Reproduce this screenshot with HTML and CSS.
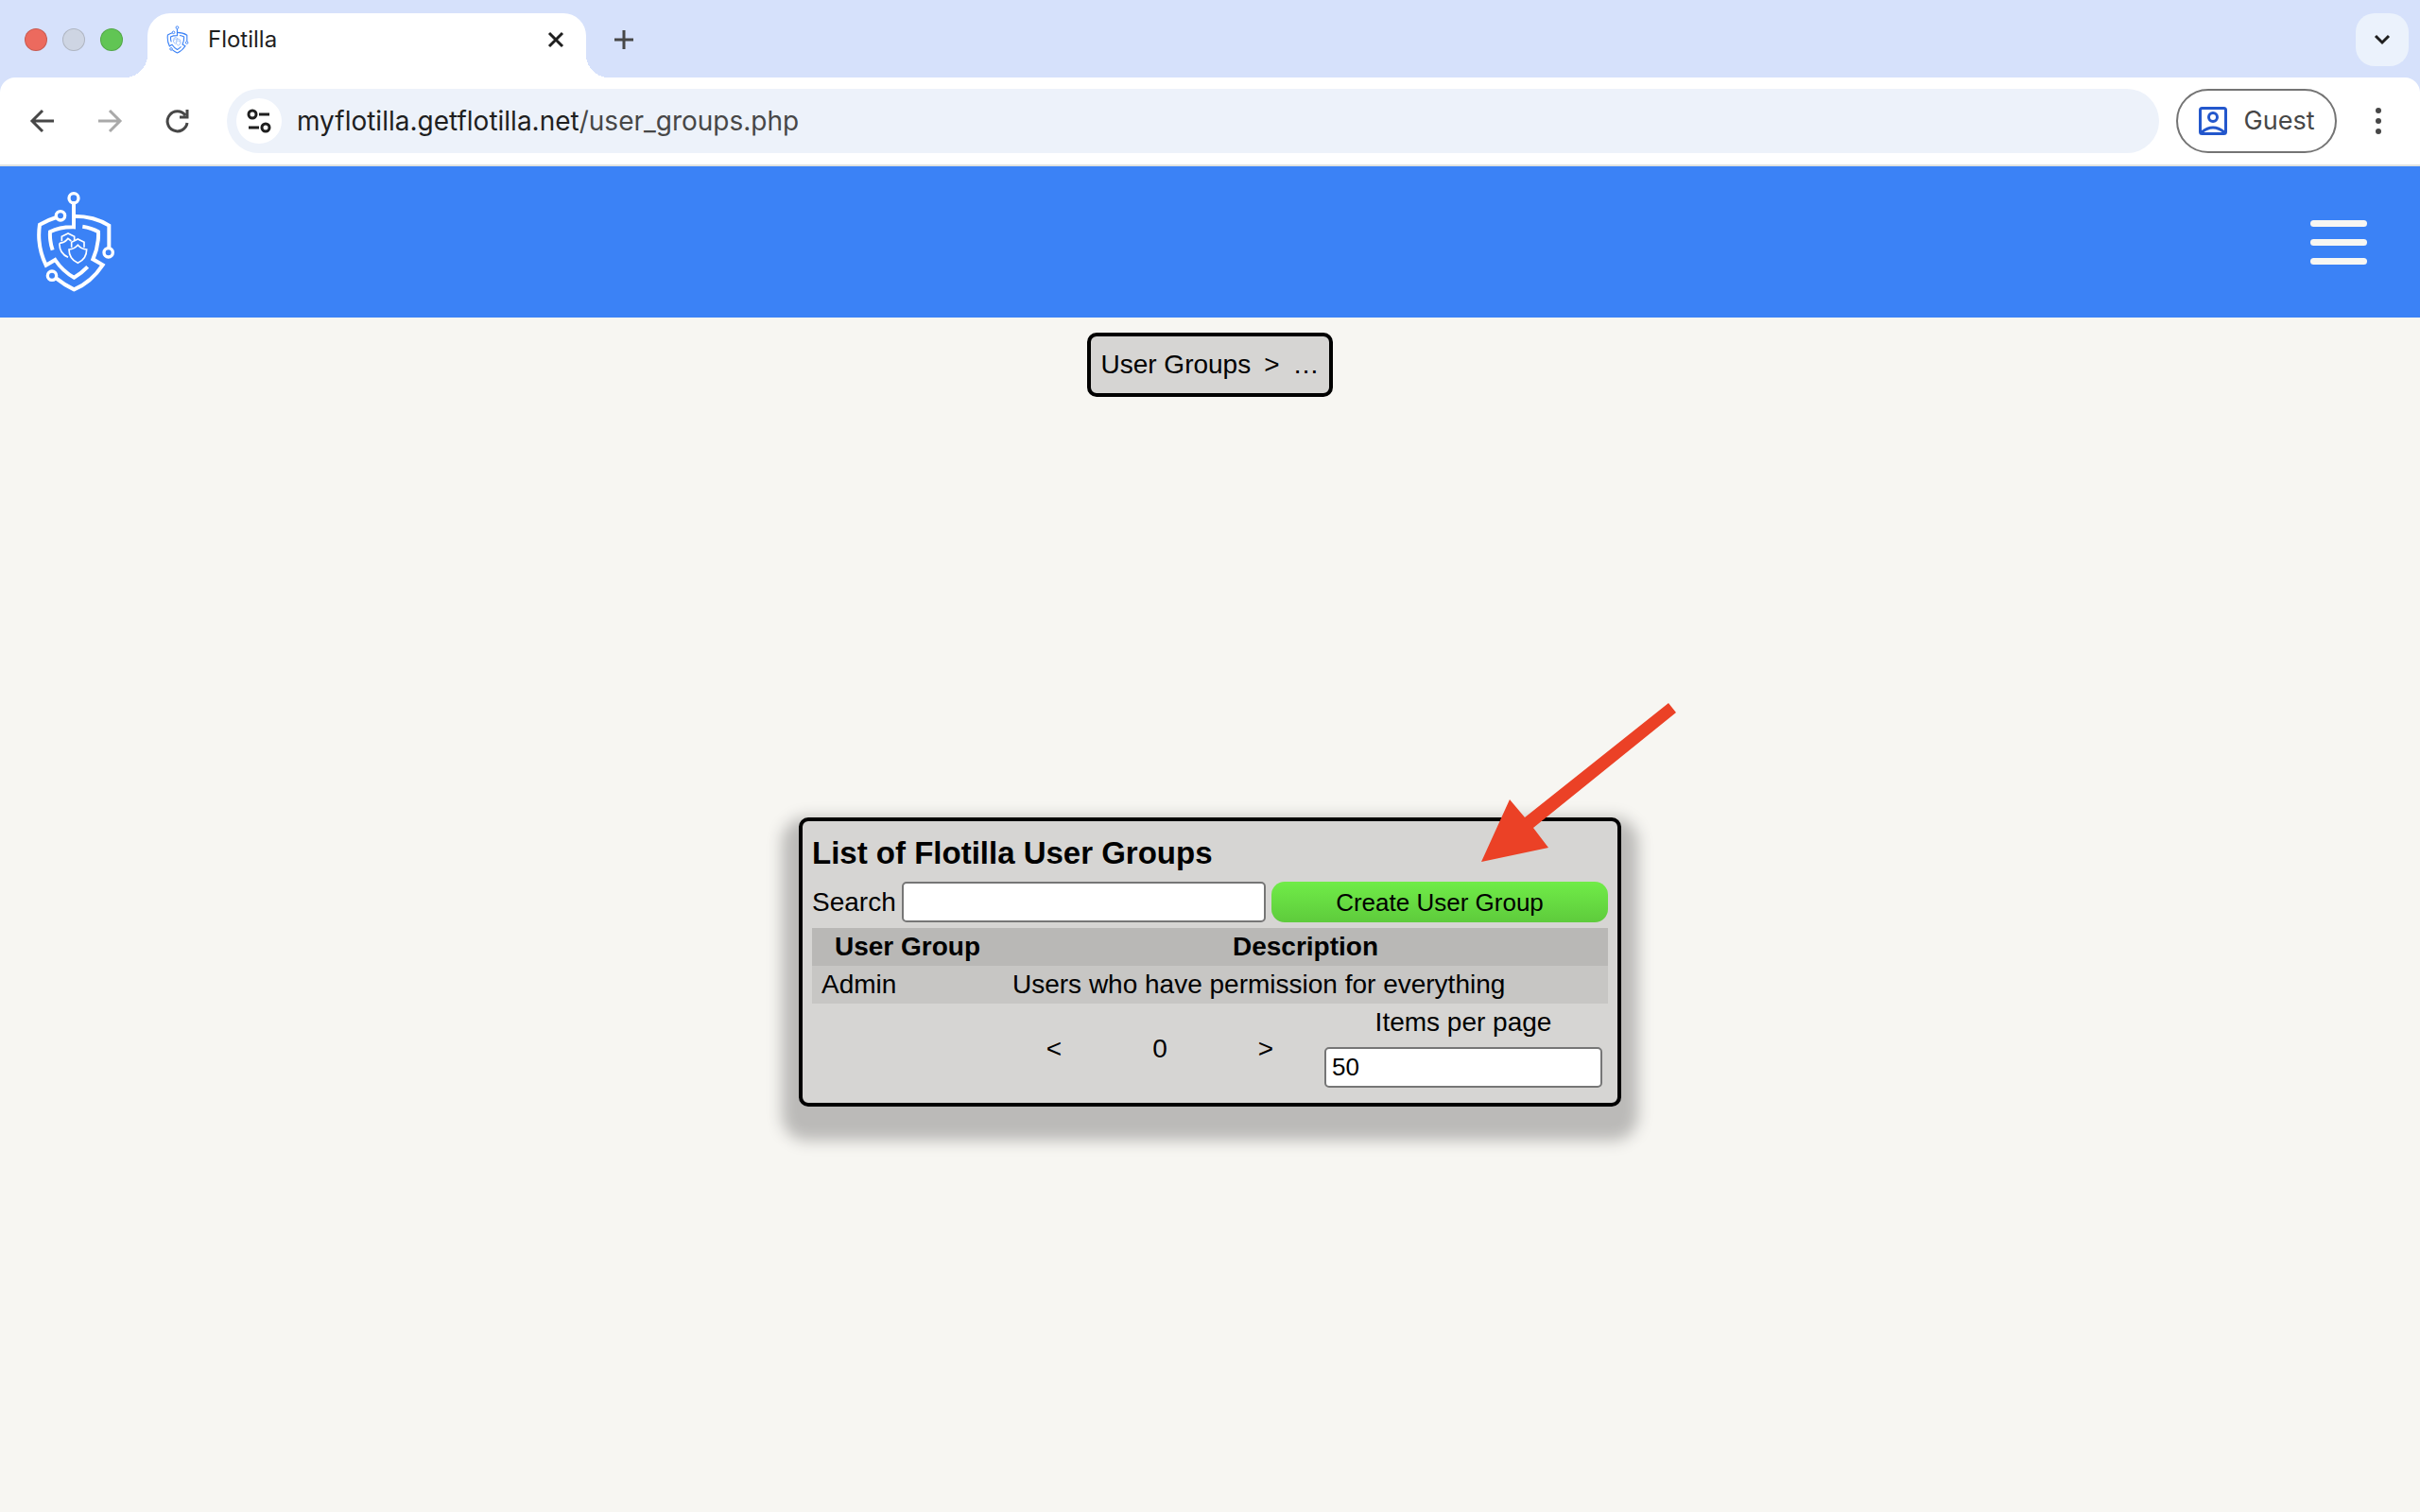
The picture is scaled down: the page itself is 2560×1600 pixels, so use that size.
FILE: index.html
```html
<!DOCTYPE html>
<html lang="en">
 <head>
  <title>Flotilla</title>
  <meta charset="utf-8" />
	<link rel="stylesheet" href="styles.css">
 </head>

 <body>
	<svg class="defs" aria-hidden="true">
		<symbol id="logo" viewBox="114 96 252 324">
			<g fill="none" stroke="currentColor" stroke-width="12">
				<circle cx="234" cy="119" r="15" stroke-width="10"/>
				<circle cx="192" cy="175" r="14" stroke-width="10"/>
				<circle cx="344" cy="292" r="14" stroke-width="10"/>
				<circle cx="165" cy="365" r="14" stroke-width="10"/>
				<path d="M234 134V211Q190 210 159 226Q157 255 167 284"/>
				<path d="M234 176Q300 176 346 206V278"/>
				<path d="M179 180Q150 189 126 203Q116 270 146 332L175 315Q200 352 235 371Q258 358 278 337"/>
				<path d="M262 209Q290 213 312 226Q314 270 295 313L326 331Q290 386 235 409Q205 395 178 373"/>
				<g stroke-width="5">
					<path d="M196 256V241L216 231L236 241V252M189 262Q206 261 216 247L226 255M189 262Q187 293 216 307"/>
					<path d="M227 275V259L247 249L267 259V275M219 282Q236 281 247 268Q258 281 275 282Q275 312 247 325Q219 312 219 282Z"/>
				</g>
			</g>
		</symbol>
	</svg>

	<div class="browser">
		<div class="tabs">
			<div class="lights"><i class="red"></i><i class="gray"></i><i class="green"></i></div>
			<div class="tab">
				<svg class="favicon"><use href="#logo"/></svg>
				<span class="tab-name">Flotilla</span>
				<button class="icon" aria-label="Close tab"><svg width="20" height="20" viewBox="0 0 20 20"><path d="M3 3L17 17M17 3L3 17" stroke="#1f1f1f" stroke-width="3"/></svg></button>
			</div>
			<button class="icon add" aria-label="New tab"><svg width="24" height="24" viewBox="0 0 24 24"><path d="M12 2V22M2 12H22" stroke="#474747" stroke-width="3"/></svg></button>
			<button class="tab-search" aria-label="Search tabs"><svg width="24" height="24" viewBox="0 0 24 24"><path d="M5 8L12 15L19 8" fill="none" stroke="#1f1f1f" stroke-width="3"/></svg></button>
		</div>

		<div class="toolbar">
			<div class="nav">
				<button class="icon" aria-label="Back"><svg width="28" height="28" viewBox="0 0 28 28"><path d="M27 14H5M15 3L4 14L15 25" fill="none" stroke="#474747" stroke-width="3"/></svg></button>
				<button class="icon" aria-label="Forward"><svg width="28" height="28" viewBox="0 0 28 28"><path d="M2 14H24M14 3L25 14L14 25" fill="none" stroke="#a9a9a9" stroke-width="3"/></svg></button>
				<button class="icon" aria-label="Reload"><svg width="28" height="28" viewBox="0 0 28 28"><path d="M22 8A10.500 10.500 0 1 0 24 16M24 2V10H16" fill="none" stroke="#474747" stroke-width="3"/></svg></button>
			</div>
			<div class="address">
				<span class="site"><svg width="28" height="28" viewBox="0 0 28 28"><g fill="none" stroke="#1f1f1f" stroke-width="3"><circle cx="7" cy="7" r="4"/><path d="M14 7H25M3 21H14"/><circle cx="21" cy="21" r="4"/></g></svg></span>
				<span class="url">myflotilla.getflotilla.net<span>/user_groups.php</span></span>
			</div>
			<button class="guest"><svg width="30" height="30" viewBox="0 0 30 30"><g fill="none" stroke="#2357cc" stroke-width="3"><rect x="1.5" y="1.5" width="27" height="27" rx="2"/><circle cx="15" cy="11" r="4.5"/><path d="M3 27Q15 17 27 27"/></g></svg>Guest</button>
			<button class="icon" aria-label="Menu"><svg width="28" height="28" viewBox="0 0 28 28" fill="#474747"><circle cx="14" cy="3" r="3"/><circle cx="14" cy="14" r="3"/><circle cx="14" cy="25" r="3"/></svg></button>
		</div>
	</div>

	<header class="header">
		<a href="#" aria-label="Flotilla"><svg class="logo"><use href="#logo"/></svg></a>
		<button class="burger" aria-label="Open menu"><i></i><i></i><i></i></button>
	</header>

	<nav class="crumbs"><a href="#">User Groups</a><span>&gt;</span><span>…</span></nav>

	<main>
		<div class="panel">
			<h3>List of Flotilla User Groups</h3>
			<div class="search">
				<label for="search">Search</label>
				<input type="text" id="search">
				<button class="create">Create User Group</button>
			</div>
			<table>
				<tr><th class="name">User Group</th><th>Description</th></tr>
				<tr><td>Admin</td><td>Users who have permission for everything</td></tr>
			</table>
			<div class="pager">
				<button class="prev">&lt;</button>
				<span>0</span>
				<button>&gt;</button>
				<div class="per-page">
					<label for="items">Items per page</label>
					<input type="text" id="items" value="50">
				</div>
			</div>
			<svg class="arrow" width="208" height="168" viewBox="0 0 208 168"><path d="M0 168L30 102L46 121L198 0L206 10L55 132L71 153Z" fill="#eb4126"/></svg>
		</div>
	</main>
 </body>
</html>
```
FILE: styles.css
```css
* {box-sizing: border-box;}
body {margin: 0; min-height: 100vh; display: flex; flex-direction: column; background: #f7f6f2; color: #000; font: 28px/40px "Liberation Sans", Arial, sans-serif;}
button {border: 0; padding: 0; background: none; font: inherit; color: inherit;}
svg {display: block;}
.defs {position: absolute; width: 0; height: 0;}
.icon {display: flex; align-items: center; justify-content: center;}

/* browser tabs */
.browser {background: #d6e1fb; font-family: Inter, sans-serif;}
.tabs {height: 82px; display: flex; align-items: center; padding: 2px 12px 0 26px;}
.lights {display: flex; gap: 16px; margin-right: 26px;}
.lights i {width: 24px; height: 24px; border-radius: 50%; border: 1px solid rgba(0,0,0,.15);}
.red {background: #ec6a5e;}
.gray {background: #ced5e3;}
.green {background: #61c554;}
.tab {width: 464px; height: 68px; align-self: flex-end; display: flex; align-items: center; padding: 0 22px 12px 20px; border-radius: 24px 24px 0 0; background: #fff; position: relative;}
.tab:before, .tab:after {content: ""; position: absolute; bottom: 0; width: 24px; height: 24px;}
.tab:before {left: -24px; background: radial-gradient(circle at 0 0, transparent 24px, #fff 24px);}
.tab:after {right: -24px; background: radial-gradient(circle at 100% 0, transparent 24px, #fff 24px);}
.favicon {width: 24px; height: 30px; color: #3b82f6;}
.tab-name {flex: 1; margin-left: 20px; font-size: 24px; color: #1f1f1f;}
.add {margin-left: 28px;}
.tab-search {width: 56px; height: 56px; margin-left: auto; display: flex; align-items: center; justify-content: center; border-radius: 20px; background: #ebf2fc;}

/* address bar */
.toolbar {height: 94px; display: flex; align-items: center; padding: 0 30px; border-bottom: 2px solid #dfe2e0; border-radius: 16px 16px 0 0; background: #fff;}
.nav {display: flex; gap: 44px; margin-right: 38px;}
.address {flex: 1; height: 68px; display: flex; align-items: center; padding: 0 10px; border-radius: 34px; background: #edf2fa;}
.site {width: 48px; height: 48px; display: flex; align-items: center; justify-content: center; border-radius: 50%; background: #fff;}
.url {margin-left: 16px; font-size: 28px; color: #1f1f1f;}
.url span {color: #474747;}
.guest {width: 170px; height: 68px; display: flex; align-items: center; justify-content: center; gap: 18px; margin: 0 30px 0 18px; border: 2px solid #747474; border-radius: 34px; font-size: 27px; color: #474747;}

/* site header */
.header {height: 160px; display: flex; align-items: center; justify-content: space-between; padding: 0 56px 0 38px; background: #3b82f6;}
.logo {width: 84px; height: 108px; color: #fff;}
.burger {width: 60px; display: grid; gap: 13px;}
.burger i {height: 7px; border-radius: 4px; background: #f7f6f2;}

.crumbs {align-self: center; display: flex; gap: 14px; margin: 16px; padding: 10px; border: 4px solid #000; border-radius: 10px; background: #d6d5d3;}
.crumbs a {color: #000; text-decoration: none;}

main {flex: 1; display: flex; align-items: center; justify-content: center;}
.panel {width: 100%; max-width: 870px; position: relative; padding: 10px; border: 4px solid #000; border-radius: 10px; background: #d6d5d3; box-shadow: 0 18px 16px 18px #bbbab8;}
h3 {margin: 0 0 6px; font-size: 33px; line-height: 48px;}
input {height: 43px; min-width: 0; padding: 0 6px; border: 2px solid #767676; border-radius: 5px; background: #fff; color: #000; font: 26px "Liberation Sans", Arial, sans-serif;}
.search {display: flex; align-items: center; gap: 6px;}
.search input {flex: 1;}
.create {width: 356px; height: 43px; border-radius: 14px; background: linear-gradient(#70ec48, #5ecb3c); font-size: 26px;}
table {width: 100%; margin-top: 6px; border-collapse: collapse; background: #c7c6c4;}
tr {height: 40px;}
th {padding: 0; background: #b9b8b6;}
td {padding: 0 10px;}
.name {width: 202px;}
.pager {display: grid; grid-template-columns: 112px 112px 112px 306px; justify-content: end; align-items: center; text-align: center;}
.per-page {display: grid; gap: 6px; padding-bottom: 6px;}
.per-page input {margin: 0 6px;}
.arrow {position: absolute; right: -64px; top: -125px;}
```
